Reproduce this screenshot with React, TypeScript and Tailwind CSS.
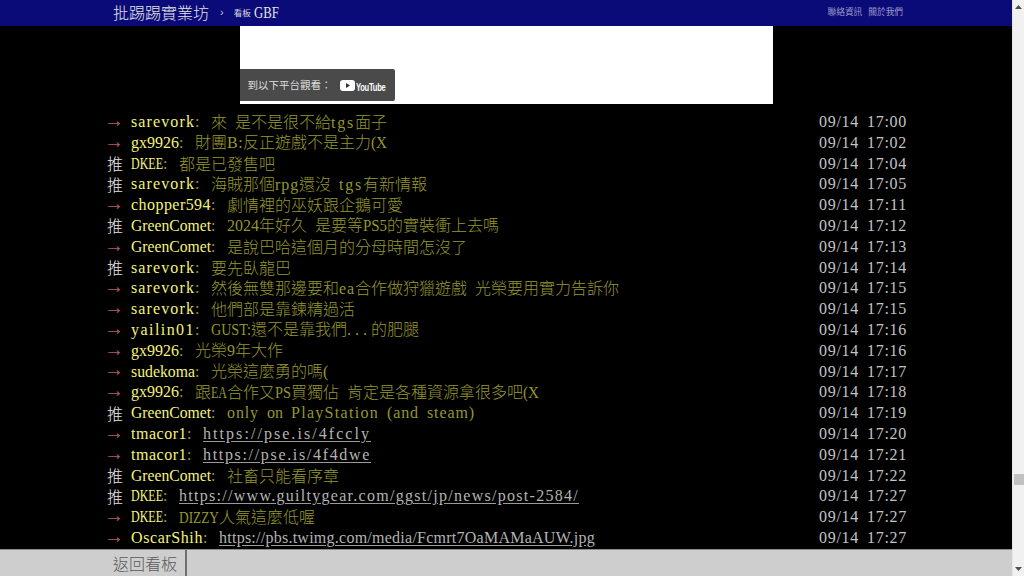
import React from "react";

type Seg = string | { link: string };
const rows: [string, string, Seg, string][] = [
  ["→", "sarevork", "來 是不是很不給tgs面子", "09/14 17:00"],
  ["→", "gx9926", "財團B:反正遊戲不是主力(X", "09/14 17:02"],
  ["推", "DKEE", "都是已發售吧", "09/14 17:04"],
  ["推", "sarevork", "海賊那個rpg還沒 tgs有新情報", "09/14 17:05"],
  ["→", "chopper594", "劇情裡的巫妖跟企鵝可愛", "09/14 17:11"],
  ["推", "GreenComet", "2024年好久 是要等PS5的實裝衝上去嗎", "09/14 17:12"],
  ["→", "GreenComet", "是說巴哈這個月的分母時間怎沒了", "09/14 17:13"],
  ["推", "sarevork", "要先臥龍巴", "09/14 17:14"],
  ["→", "sarevork", "然後無雙那邊要和ea合作做狩獵遊戲 光榮要用實力告訴你", "09/14 17:15"],
  ["→", "sarevork", "他們部是靠鍊精過活", "09/14 17:15"],
  ["→", "yailin01", "GUST:還不是靠我們...的肥腿", "09/14 17:16"],
  ["→", "gx9926", "光榮9年大作", "09/14 17:16"],
  ["→", "sudekoma", "光榮這麼勇的嗎(", "09/14 17:17"],
  ["→", "gx9926", "跟EA合作又PS買獨佔 肯定是各種資源拿很多吧(X", "09/14 17:18"],
  ["推", "GreenComet", "only on PlayStation (and steam)", "09/14 17:19"],
  ["→", "tmacor1", { link: "https://pse.is/4fccly" }, "09/14 17:20"],
  ["→", "tmacor1", { link: "https://pse.is/4f4dwe" }, "09/14 17:21"],
  ["推", "GreenComet", "社畜只能看序章", "09/14 17:22"],
  ["推", "DKEE", { link: "https://www.guiltygear.com/ggst/jp/news/post-2584/" }, "09/14 17:27"],
  ["→", "DKEE", "DIZZY人氣這麼低喔", "09/14 17:27"],
  ["→", "OscarShih", { link: "https://pbs.twimg.com/media/Fcmrt7OaMAMaAUW.jpg" }, "09/14 17:27"],
];

const ctx = document.createElement("canvas").getContext("2d");
function naturalWidth(run: string) {
  if (!ctx) return run.length * 8;
  ctx.font = '16px "Liberation Serif"';
  return ctx.measureText(run).width;
}

// A run of serif Latin fills the original's half-width 8px cells: wide runs are
// condensed, narrow ones spaced out.
function Latin({ run }: { run: string }) {
  const cell = 8 * run.length;
  const natural = naturalWidth(run);
  if (natural > cell) {
    return (
      <span className="inline-block align-baseline" style={{ width: `${cell}px` }}>
        <span
          className="inline-block origin-left font-['Liberation_Serif',serif] text-[16px] whitespace-pre"
          style={{ transform: `scaleX(${cell / natural})` }}
        >
          {run}
        </span>
      </span>
    );
  }
  return (
    <span
      className="font-['Liberation_Serif',serif] text-[16px] whitespace-pre"
      style={{ letterSpacing: `${(cell - natural) / run.length}px` }}
    >
      {run}
    </span>
  );
}

function Cells({ text }: { text: string }) {
  const runs = text.match(/ +|[\x21-\x7e]+|[^\x20-\x7e]+/g) ?? [];
  return (
    <>
      {runs.map((run, i) =>
        /^[\x20-\x7e]/.test(run) ? (
          <Latin key={i} run={run} />
        ) : (
          <span key={i} className="font-['Noto_Sans_CJK_TC',sans-serif] text-[16px] font-light whitespace-pre">
            {run}
          </span>
        )
      )}
    </>
  );
}

function Row({ tag, user, content, time }: { tag: string; user: string; content: Seg; time: string }) {
  return (
    <div className="flex h-[20.8px] items-center leading-[20.8px] whitespace-nowrap">
      {tag === "推" ? (
        <span className="w-6 shrink-0 font-['Noto_Sans_CJK_TC',sans-serif] text-[16px] font-light text-[#e8e8e8]">{tag}</span>
      ) : (
        <span className="w-6 shrink-0 -translate-x-[3px] -translate-y-[2px] font-['Liberation_Serif',serif] text-[20px] leading-[20px] text-[#b85a64]">{tag}</span>
      )}
      <span className="text-[#f4f47a]">
        <Cells text={user} />
      </span>
      <span className="text-[#99993c]">
        <Cells text=": " />
      </span>
      {typeof content === "string" ? (
        <span className="text-[#96962e]">
          <Cells text={content} />
        </span>
      ) : (
        <a className="text-[#b4b4b4] underline decoration-[#9a9a9a] underline-offset-2">
          <Cells text={content.link} />
        </a>
      )}
      <span className="ml-auto text-[#c4c4c4]">
        <Cells text={time} />
      </span>
    </div>
  );
}

function YouTubeLogo() {
  return (
    <span className="flex items-center gap-[1px]">
      <svg width="15" height="11" viewBox="0 0 15 11" className="shrink-0">
        <rect width="15" height="11" rx="3" fill="#fff" />
        <path d="M6 3.1 10 5.5 6 7.9Z" fill="#333" />
      </svg>
      <span className="w-[29px]">
        <span className="inline-block origin-left scale-x-[0.66] font-['Liberation_Sans',sans-serif] text-[11.5px] font-bold tracking-[-0.4px] text-white">
          YouTube
        </span>
      </span>
    </span>
  );
}

export default function App() {
  return (
    <div className="flex h-[576px] w-full overflow-hidden bg-black">
      <div className="flex min-w-0 flex-1 flex-col">
        <header className="flex h-[26px] shrink-0 items-center bg-[#0a0a78] pr-[109px] pb-[2px] pl-[113px]">
          <span className="font-['Noto_Sans_CJK_TC',sans-serif] text-[16px] leading-none font-light text-[#e4e4e4]">批踢踢實業坊</span>
          <span className="ml-[11px] font-['Liberation_Sans',sans-serif] text-[11px] text-[#c8c8d8]">›</span>
          <span className="ml-[10px] font-['Noto_Sans_CJK_TC',sans-serif] text-[8.5px] text-[#d8d8e0]">看板</span>
          <span className="ml-[3px] w-[26px]">
            <span className="inline-block origin-left scale-x-[0.8] font-['Liberation_Serif',serif] text-[16px] text-[#e4e4e4]">GBF</span>
          </span>
          <nav className="ml-auto flex gap-[6px] font-['Noto_Sans_CJK_TC',sans-serif] text-[8.7px] text-[#9a9ac8]">
            <span>聯絡資訊</span>
            <span>關於我們</span>
          </nav>
        </header>
        <main className="min-h-0 flex-1 overflow-hidden">
          <div className="mx-auto flex h-[78px] w-[533px] items-end bg-white pb-[3px]">
            <div className="flex h-[32px] w-[155px] items-center gap-[8px] rounded-r-[2px] bg-[#4a4a4a] pl-2">
              <span className="font-['Noto_Sans_CJK_TC',sans-serif] text-[10.5px] whitespace-nowrap text-[#dcdcdc]">到以下平台觀看：</span>
              <YouTubeLogo />
            </div>
          </div>
          <div className="mx-auto mt-[7.5px] w-[800px] translate-x-[1px]">
            {rows.map((r, i) => (
              <Row key={i} tag={r[0]} user={r[1]} content={r[2]} time={r[3]} />
            ))}
          </div>
        </main>
        <footer className="flex h-[27px] shrink-0 items-stretch border-t border-[#8a8a8a] bg-[#cecece]">
          <div className="flex w-[187px] items-center border-r-2 border-[#6f6f6f] pl-[113px] font-['Noto_Sans_CJK_TC',sans-serif] text-[16px] font-light whitespace-nowrap text-[#5a5a5a]">
            返回看板
          </div>
        </footer>
      </div>
      <div className="flex w-3 shrink-0 flex-col items-center justify-between border-l border-[#e6e6e6] bg-[#f1f1f1] py-[5px]">
        <svg width="7" height="4" viewBox="0 0 7 4" className="shrink-0"><path d="M3.5 0 7 4H0Z" fill="#505050" /></svg>
        <div className="relative h-full w-full">
          <div className="absolute top-[465px] left-[1px] h-[11px] w-[10px] bg-[#c1c1c1]" />
        </div>
        <svg width="7" height="4" viewBox="0 0 7 4" className="shrink-0"><path d="M0 0H7L3.5 4Z" fill="#505050" /></svg>
      </div>
    </div>
  );
}
